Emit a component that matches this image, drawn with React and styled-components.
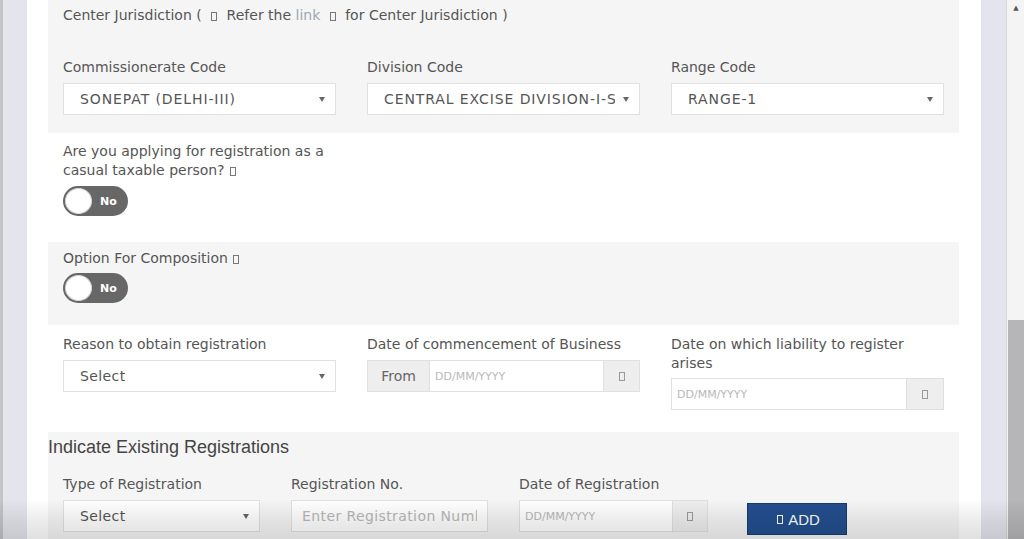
import React from "react";
import styled, { createGlobalStyle } from "styled-components";

const GlobalStyle = createGlobalStyle`
  html, body {
    margin: 0;
    padding: 0;
    overflow: hidden;
    background: #fff;
  }
  * { box-sizing: border-box; }
`;

const Screen = styled.div`
  display: flex;
  width: 1024px;
  height: 539px;
  overflow: hidden;
  font-family: "DejaVu Sans", Verdana, sans-serif;
  color: #555;
  position: relative;
`;

const LeftGutter = styled.div`
  width: 27px;
  flex-shrink: 0;
  background: #e4e4ec;
  border-left: 3px solid #c4c4c8;
`;

const RightGutter = styled.div`
  width: 25px;
  flex-shrink: 0;
  background: #e4e4ee;
`;

const Scrollbar = styled.div`
  width: 19px;
  flex-shrink: 0;
  display: flex;
  flex-direction: column;
  background: #f4f4f4;
  border-left: 1px solid #d6d6d6;
`;

const ScrollArrow = styled.div`
  height: 16px;
  display: flex;
  justify-content: center;
  align-items: center;
  font-size: 7px;
  color: #555;
`;

const ScrollTrack = styled.div`
  flex: 1;
  display: flex;
  flex-direction: column;
  padding-top: 304px;
`;

const ScrollThumb = styled.div`
  flex: 1;
  background: #b6b6b8;
  margin: 0 1px;
`;

const Main = styled.div`
  flex: 1;
  background: #fff;
  padding: 0 22px 0 21px;
  display: flex;
  flex-direction: column;
`;

const Section = styled.div`
  background: ${(p) => (p.$grey ? "#f5f5f5" : "#fff")};
  padding: ${(p) => p.$pad || "0 15px"};
  margin-bottom: ${(p) => p.$mb || "0"};
  flex: ${(p) => (p.$fill ? 1 : "none")};
`;

/* missing icon-font glyph, shown as a small box */
const IconBox = styled.span`
  display: inline-block;
  width: 6px;
  height: 9px;
  border: 1px solid ${(p) => p.$color || "#777"};
  margin: 0 ${(p) => p.$m || "4px"};
  vertical-align: ${(p) => p.$va || "-1px"};
`;

const Heading = styled.div`
  font-size: 14px;
  line-height: 20px;
  color: #555;
`;

const LinkText = styled.span`
  color: #a0a8b4;
`;

const BigHeading = styled.div`
  font-family: "Liberation Sans", Arial, sans-serif;
  font-size: 18px;
  line-height: 22px;
  color: #444;
  margin-left: -15px;
`;

const Row = styled.div`
  display: grid;
  grid-template-columns: ${(p) => p.$cols || "273px 273px 273px"};
  column-gap: ${(p) => p.$gap || "31px"};
  margin-top: ${(p) => p.$mt || "0"};
  align-items: start;
`;

const Field = styled.div`
  display: flex;
  flex-direction: column;
`;

const Label = styled.div`
  font-size: 14px;
  line-height: 19px;
  color: #555;
  margin-bottom: ${(p) => p.$mb || "6px"};
  max-width: ${(p) => p.$maxw || "none"};
`;

const SelectBox = styled.div`
  height: 32px;
  background: #fff;
  border: 1px solid #e0e0e0;
  display: flex;
  align-items: center;
  justify-content: space-between;
  padding: ${(p) => p.$pad || "0 10px 0 16px"};
  font-size: 14px;
  letter-spacing: ${(p) => (p.$caps ? "0.9px" : "0.4px")};
  color: #555;
  white-space: nowrap;
  overflow: hidden;
`;

const SelectText = styled.span`
  overflow: hidden;
  text-overflow: clip;
`;

const Caret = styled.span`
  flex-shrink: 0;
  width: 0;
  height: 0;
  margin-left: 8px;
  border-left: 3px solid transparent;
  border-right: 3px solid transparent;
  border-top: 5px solid #666;
`;

const InputGroup = styled.div`
  display: flex;
  height: 32px;
  border: 1px solid #e0e0e0;
  background: #fff;
`;

const Addon = styled.div`
  width: ${(p) => p.$w || "36px"};
  flex-shrink: 0;
  background: #eeeeee;
  display: flex;
  align-items: center;
  justify-content: center;
  font-size: 14px;
  color: #666;
  border-left: ${(p) => (p.$right ? "1px solid #e0e0e0" : "none")};
  border-right: ${(p) => (p.$right ? "none" : "1px solid #e0e0e0")};
`;

const Placeholder = styled.div`
  flex: 1;
  display: flex;
  align-items: center;
  padding-left: ${(p) => p.$pl || "5px"};
  font-size: ${(p) => p.$size || "11px"};
  color: #b8b8b8;
  white-space: nowrap;
  overflow: hidden;
`;

const Toggle = styled.div`
  width: 65px;
  height: 30px;
  border-radius: 15px;
  background: #676767;
  display: flex;
  align-items: center;
  padding: 2px;
`;

const Knob = styled.div`
  width: 27px;
  height: 26px;
  border-radius: 50%;
  background: #fff;
  border: 1px solid #d8d8d8;
`;

const ToggleText = styled.span`
  font-size: 11px;
  font-weight: bold;
  color: #fff;
  margin-left: 8px;
`;

const AddButton = styled.div`
  width: 100px;
  height: 32px;
  margin-top: 28px;
  margin-left: 8px;
  background: #234e8e;
  border: 1px solid #173a6e;
  color: #fff;
  font-family: "Liberation Sans", Arial, sans-serif;
  font-size: 15px;
  display: flex;
  align-items: center;
  justify-content: center;
  gap: 2px;
`;

const BottomShade = styled.div`
  position: absolute;
  left: 0;
  right: 0;
  bottom: 0;
  height: 40px;
  pointer-events: none;
  background: linear-gradient(to bottom, rgba(0,0,0,0), rgba(0,0,0,0.07) 50%, rgba(0,0,0,0.12));
`;

const Select = ({ value, caps }) => (
  <SelectBox $caps={caps}>
    <SelectText>{value}</SelectText>
    <Caret />
  </SelectBox>
);

const ToggleNo = () => (
  <Toggle>
    <Knob />
    <ToggleText>No</ToggleText>
  </Toggle>
);

const CalIcon = () => <IconBox $m="0" $color="#999" $va="0" />;

export default function App() {
  return (
    <Screen>
      <GlobalStyle />
      <LeftGutter />
      <Main>
        <Section $grey $pad="5px 15px 18px">
          <Heading>
            Center Jurisdiction ( <IconBox $m="5px" /> Refer the <LinkText>link</LinkText>{" "}
            <IconBox $m="5px" /> for Center Jurisdiction )
          </Heading>
          <Row $mt="33px">
            <Field>
              <Label>Commissionerate Code</Label>
              <Select caps value="SONEPAT (DELHI-III)" />
            </Field>
            <Field>
              <Label>Division Code</Label>
              <Select caps value="CENTRAL EXCISE DIVISION-I-SONEPAT" />
            </Field>
            <Field>
              <Label>Range Code</Label>
              <Select caps value="RANGE-1" />
            </Field>
          </Row>
        </Section>

        <Section $pad="9px 15px 24px" $mb="2px">
          <Label $maxw="273px">
            Are you applying for registration as a casual taxable person? <IconBox $m="1px" />
          </Label>
          <ToggleNo />
        </Section>

        <Section $grey $pad="7px 15px 22px">
          <Label $mb="5px">
            Option For Composition <IconBox $m="1px" />
          </Label>
          <ToggleNo />
        </Section>

        <Section $pad="10px 15px 22px">
          <Row>
            <Field>
              <Label>Reason to obtain registration</Label>
              <Select value="Select" />
            </Field>
            <Field>
              <Label>Date of commencement of Business</Label>
              <InputGroup>
                <Addon $w="62px">From</Addon>
                <Placeholder>DD/MM/YYYY</Placeholder>
                <Addon $right>
                  <CalIcon />
                </Addon>
              </InputGroup>
            </Field>
            <Field>
              <Label $mb="5px" $maxw="250px">Date on which liability to register arises</Label>
              <InputGroup>
                <Placeholder>DD/MM/YYYY</Placeholder>
                <Addon $right $w="37px">
                  <CalIcon />
                </Addon>
              </InputGroup>
            </Field>
          </Row>
        </Section>

        <Section $grey $fill $pad="4px 15px 20px">
          <BigHeading>Indicate Existing Registrations</BigHeading>
          <Row $cols="197px 197px 189px auto" $gap="31px" $mt="17px">
            <Field>
              <Label>Type of Registration</Label>
              <Select value="Select" />
            </Field>
            <Field>
              <Label>Registration No.</Label>
              <SelectBox $pad="0 10px">
                <Placeholder $pl="0" $size="14px">Enter Registration Number</Placeholder>
              </SelectBox>
            </Field>
            <Field>
              <Label>Date of Registration</Label>
              <InputGroup>
                <Placeholder>DD/MM/YYYY</Placeholder>
                <Addon $right $w="35px">
                  <CalIcon />
                </Addon>
              </InputGroup>
            </Field>
            <AddButton>
              <IconBox $color="#fff" $m="3px" $va="0" /> ADD
            </AddButton>
          </Row>
        </Section>
      </Main>
      <RightGutter />
      <Scrollbar>
        <ScrollArrow>▲</ScrollArrow>
        <ScrollTrack>
          <ScrollThumb />
        </ScrollTrack>
      </Scrollbar>
      <BottomShade />
    </Screen>
  );
}
